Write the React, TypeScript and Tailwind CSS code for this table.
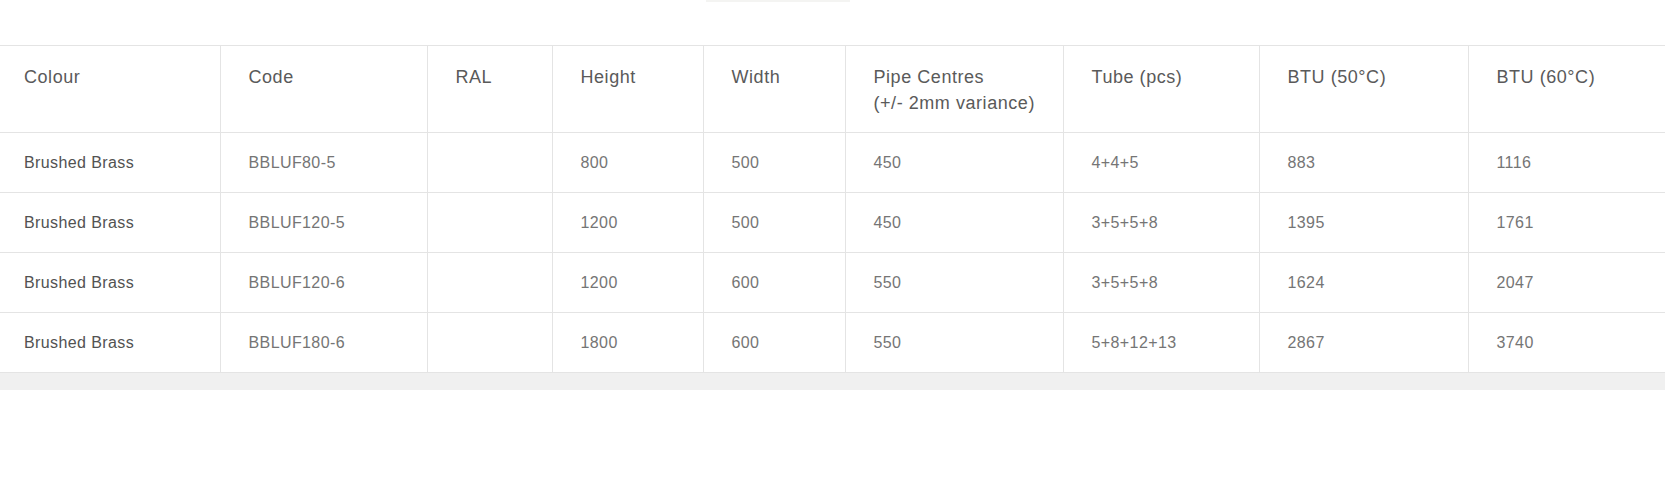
import React from "react";

const headers: string[][] = [
  ["Colour"],
  ["Code"],
  ["RAL"],
  ["Height"],
  ["Width"],
  ["Pipe Centres", "(+/- 2mm variance)"],
  ["Tube (pcs)"],
  ["BTU (50°C)"],
  ["BTU (60°C)"],
];

const rows = [
  ["Brushed Brass", "BBLUF80-5", "", "800", "500", "450", "4+4+5", "883", "1116"],
  ["Brushed Brass", "BBLUF120-5", "", "1200", "500", "450", "3+5+5+8", "1395", "1761"],
  ["Brushed Brass", "BBLUF120-6", "", "1200", "600", "550", "3+5+5+8", "1624", "2047"],
  ["Brushed Brass", "BBLUF180-6", "", "1800", "600", "550", "5+8+12+13", "2867", "3740"],
];

const widths = [
  "w-[220px]",
  "w-[207px]",
  "w-[125px]",
  "w-[151px]",
  "w-[142px]",
  "w-[218px]",
  "w-[196px]",
  "w-[209px]",
  "w-[197px]",
];

export default function App() {
  return (
    <div className="w-[1665px] h-[500px] bg-white overflow-hidden font-['Liberation_Sans',Arial,sans-serif]">
      <div className="h-[45px]">
        <div className="ml-[706px] w-[144px] h-[2px] bg-[#f4f4f2]" />
      </div>
      <div className="w-[1665px] overflow-hidden">
        <table className="table-fixed border-collapse w-[1665px]">
          <colgroup>
            {widths.map((w, i) => (
              <col key={i} className={w} />
            ))}
          </colgroup>
          <thead>
            <tr>
              {headers.map((h, i) => (
                <th
                  key={i}
                  className={`${i === 0 ? "pl-[24px]" : "pl-[28px]"} pr-[10px] pt-[18px] pb-[16px] h-[86px] align-top text-left font-normal text-[18px] leading-[26px] tracking-[0.55px] text-[#5a5a5a] border-t border-b border-r border-[#e4e4e4] last:border-r-0`}
                >
                  {h.map((line, j) => (
                    <div key={j}>{line}</div>
                  ))}
                </th>
              ))}
            </tr>
          </thead>
          <tbody>
            {rows.map((r, ri) => (
              <tr key={ri}>
                {r.map((c, ci) => (
                  <td
                    key={ci}
                    className={`${
                      ci === 0
                        ? "pl-[24px] font-medium text-[#525252]"
                        : "pl-[28px] text-[#757575]"
                    } pr-[10px] h-[60px] align-middle text-[16px] leading-[20px] tracking-[0.4px] border-b border-r border-[#e4e4e4] last:border-r-0`}
                  >
                    {c}
                  </td>
                ))}
              </tr>
            ))}
          </tbody>
        </table>
        <div className="h-[17px] bg-[#f0f0f0]" />
      </div>
    </div>
  );
}
